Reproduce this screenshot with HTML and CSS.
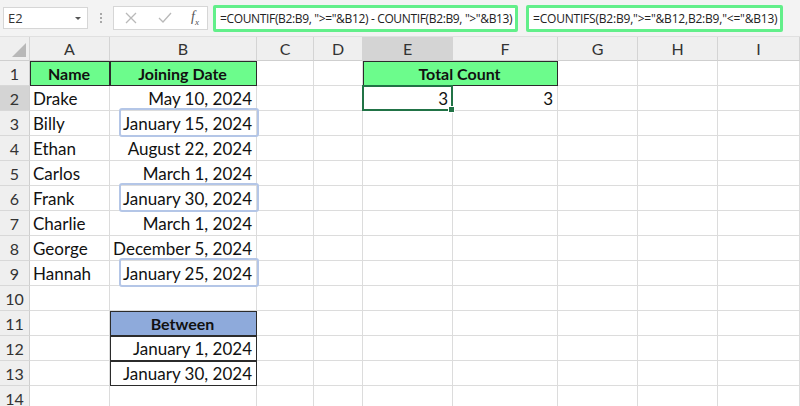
FILE: index.html
```html
<!DOCTYPE html>
<html>
<head>
<meta charset="utf-8">
<link rel="stylesheet" href="styles.css">
</head>
<body>
<div class="toolbar">
  <div class="namebox"><span>E2</span><span class="caret"></span></div>
  <div class="dots"><i></i><i></i><i></i></div>
  <div class="fxbox">
    <svg class="ico" width="14" height="14" viewBox="0 0 14 14"><path d="M2 2L12 12M12 2L2 12" stroke="#b9b9b9" stroke-width="1.3" fill="none"/></svg>
    <svg class="ico" width="16" height="14" viewBox="0 0 16 14"><path d="M2 7L6 11L14 2" stroke="#b9b9b9" stroke-width="1.3" fill="none"/></svg>
    <span class="fx">f<sub>x</sub></span>
  </div>
  <div class="formula f1">=COUNTIF(B2:B9, "&gt;="&amp;B12) - COUNTIF(B2:B9, "&gt;"&amp;B13)</div>
  <div class="formula f2">=COUNTIFS(B2:B9,"&gt;="&amp;B12,B2:B9,"&lt;="&amp;B13)</div>
</div>
<div class="sheet">
  <div class="corner"><span class="tri"></span></div>
  <div class="ch">A</div><div class="ch">B</div><div class="ch">C</div><div class="ch">D</div><div class="ch sel">E</div><div class="ch">F</div><div class="ch">G</div><div class="ch">H</div><div class="ch">I</div>

  <div class="rh">1</div><div class="c green b">Name</div><div class="c green b">Joining Date</div><div class="c"></div><div class="c"></div><div class="c green b span2">Total Count</div><div class="c"></div><div class="c"></div><div class="c"></div>

  <div class="rh sel">2</div><div class="c">Drake</div><div class="c r">May 10, 2024</div><div class="c"></div><div class="c"></div><div class="c r active">3</div><div class="c r">3</div><div class="c"></div><div class="c"></div><div class="c"></div>

  <div class="rh">3</div><div class="c">Billy</div><div class="c r hl">January 15, 2024</div><div class="c"></div><div class="c"></div><div class="c"></div><div class="c"></div><div class="c"></div><div class="c"></div><div class="c"></div>

  <div class="rh">4</div><div class="c">Ethan</div><div class="c r">August 22, 2024</div><div class="c"></div><div class="c"></div><div class="c"></div><div class="c"></div><div class="c"></div><div class="c"></div><div class="c"></div>

  <div class="rh">5</div><div class="c">Carlos</div><div class="c r">March 1, 2024</div><div class="c"></div><div class="c"></div><div class="c"></div><div class="c"></div><div class="c"></div><div class="c"></div><div class="c"></div>

  <div class="rh">6</div><div class="c">Frank</div><div class="c r hl">January 30, 2024</div><div class="c"></div><div class="c"></div><div class="c"></div><div class="c"></div><div class="c"></div><div class="c"></div><div class="c"></div>

  <div class="rh">7</div><div class="c">Charlie</div><div class="c r">March 1, 2024</div><div class="c"></div><div class="c"></div><div class="c"></div><div class="c"></div><div class="c"></div><div class="c"></div><div class="c"></div>

  <div class="rh">8</div><div class="c">George</div><div class="c r">December 5, 2024</div><div class="c"></div><div class="c"></div><div class="c"></div><div class="c"></div><div class="c"></div><div class="c"></div><div class="c"></div>

  <div class="rh">9</div><div class="c">Hannah</div><div class="c r hl">January 25, 2024</div><div class="c"></div><div class="c"></div><div class="c"></div><div class="c"></div><div class="c"></div><div class="c"></div><div class="c"></div>

  <div class="rh">10</div><div class="c"></div><div class="c"></div><div class="c"></div><div class="c"></div><div class="c"></div><div class="c"></div><div class="c"></div><div class="c"></div><div class="c"></div>

  <div class="rh">11</div><div class="c"></div><div class="c blue b">Between</div><div class="c"></div><div class="c"></div><div class="c"></div><div class="c"></div><div class="c"></div><div class="c"></div><div class="c"></div>

  <div class="rh">12</div><div class="c"></div><div class="c r bx">January 1, 2024</div><div class="c"></div><div class="c"></div><div class="c"></div><div class="c"></div><div class="c"></div><div class="c"></div><div class="c"></div>

  <div class="rh">13</div><div class="c"></div><div class="c r bx">January 30, 2024</div><div class="c"></div><div class="c"></div><div class="c"></div><div class="c"></div><div class="c"></div><div class="c"></div><div class="c"></div>

  <div class="rh">14</div><div class="c"></div><div class="c"></div><div class="c"></div><div class="c"></div><div class="c"></div><div class="c"></div><div class="c"></div><div class="c"></div><div class="c"></div>
</div>
</body>
</html>
```
FILE: styles.css
```css
* { box-sizing: border-box; }
html, body { margin: 0; padding: 0; }
body {
  width: 800px;
  height: 406px;
  overflow: hidden;
  background: #fff;
  font-family: Lato, "Open Sans", sans-serif;
  color: #111;
}
.toolbar {
  height: 37px;
  background: #f3f3f3;
  border-bottom: 1px solid #e0e0e0;
  display: flex;
  align-items: center;
  padding-left: 3px;
}
.namebox {
  width: 85px;
  height: 22px;
  background: #fff;
  border: 1px solid #d6d6d6;
  display: flex;
  align-items: center;
  justify-content: space-between;
  padding: 0 6px 0 4px;
  font-size: 13px;
  color: #333;
  font-family: "Open Sans", sans-serif;
}
.caret {
  width: 0; height: 0;
  border-left: 3px solid transparent;
  border-right: 3px solid transparent;
  border-top: 3px solid #555;
}
.dots {
  width: 25px;
  display: flex;
  flex-direction: column;
  align-items: center;
  gap: 2px;
}
.dots i {
  width: 2px; height: 2px; background: #a8a8a8; display: block;
}
.fxbox {
  width: 95px;
  height: 24px;
  background: #fff;
  border: 1px solid #d6d6d6;
  display: flex;
  align-items: center;
  justify-content: space-between;
  padding: 0 8px 0 10px;
}
.fx {
  font-family: "Liberation Serif", serif;
  font-style: italic;
  font-size: 14px;
  color: #555;
}
.fx sub { font-size: 9px; }
.formula {
  height: 27px;
  background: #fff;
  border: 3px solid #62ef8a;
  border-radius: 2px;
  display: flex;
  align-items: center;
  font-family: "Open Sans", sans-serif;
  font-size: 12px;
  letter-spacing: -0.35px;
  color: #222;
  white-space: nowrap;
  padding-left: 4px;
}
.f1 { width: 305px; margin-left: 5px; }
.f2 { width: 257px; margin-left: 8px; letter-spacing: -0.2px; }

.sheet {
  display: grid;
  grid-template-columns: 30px 80px 147px 57px 49px 90px 105px 80px 80px 82px;
  grid-template-rows: 24px repeat(14, 25px);
}
.corner {
  background: #efefef;
  border-right: 1px solid #d4d4d4;
  border-bottom: 1px solid #cfcfcf;
  position: relative;
}
.tri {
  position: absolute;
  right: 3px; bottom: 3px;
  width: 0; height: 0;
  border-left: 14px solid transparent;
  border-bottom: 14px solid #b8b8b8;
}
.ch {
  background: #efefef;
  border-right: 1px solid #d4d4d4;
  border-bottom: 1px solid #cfcfcf;
  display: flex;
  align-items: center;
  justify-content: center;
  font-size: 16px;
  color: #333;
}
.rh {
  background: #efefef;
  border-right: 1px solid #cfcfcf;
  border-bottom: 1px solid #d8d8d8;
  display: flex;
  align-items: center;
  justify-content: center;
  font-size: 16px;
  color: #333;
}
.sel { background: #d4d4d4; }
.c {
  border-right: 1px solid #dcdcdc;
  border-bottom: 1px solid #dcdcdc;
  display: flex;
  align-items: flex-end;
  padding: 0 4px 1px 3px;
  font-size: 17px;
  white-space: nowrap;
  position: relative;
}
.r { justify-content: flex-end; }
.green {
  background: #6cfc8c;
  justify-content: center;
  outline: 1px solid #2b2b2b;
  outline-offset: -1px;
}
.blue {
  background: #8eaadb;
  justify-content: center;
  outline: 1px solid #2b2b2b;
  outline-offset: -1px;
}
.b { font-weight: bold; font-size: 16px; padding-bottom: 2px; }
.bx {
  outline: 1px solid #2b2b2b;
  outline-offset: -1px;
}
.span2 { grid-column: span 2; }
.active::after {
  content: "";
  position: absolute;
  left: -1px; top: -1px; right: -1px; bottom: -1px;
  border: 2px solid #217346;
}
.active::before {
  content: "";
  position: absolute;
  right: -3px; bottom: -3px;
  width: 5px; height: 5px;
  background: #217346;
  border: 1px solid #fff;
  z-index: 2;
}
.hl::after {
  content: "";
  position: absolute;
  left: 9px; right: -3px; top: -3px; bottom: -2px;
  border: 2px solid #b4c6e7;
  border-radius: 3px;
  z-index: 1;
}
```
